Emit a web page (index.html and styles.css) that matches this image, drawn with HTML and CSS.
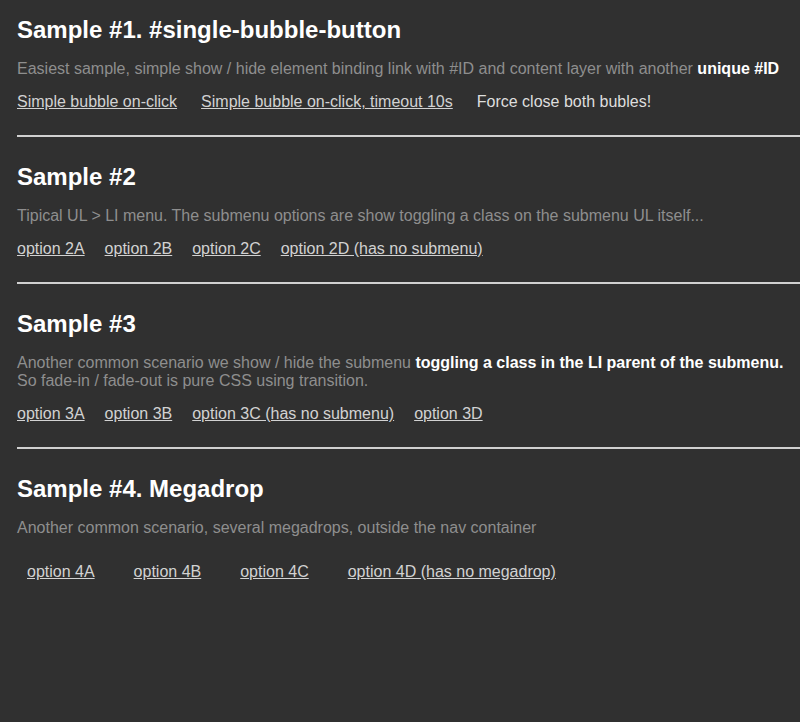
FILE: index.html
```html
<!DOCTYPE html>
<html>
<head>
<meta charset="utf-8">
<link rel="stylesheet" href="styles.css">
</head>
<body>
<section class="sample">
  <h2 class="title">Sample #1. #single-bubble-button</h2>
  <p class="desc">Easiest sample, simple show / hide element binding link with #ID and content layer with another <strong class="hl">unique #ID</strong></p>
  <nav class="links links-wide">
    <a href="#" class="link">Simple bubble on-click</a>
    <a href="#" class="link">Simple bubble on-click, timeout 10s</a>
    <span class="link plain">Force close both bubles!</span>
  </nav>
</section>
<hr class="rule">
<section class="sample">
  <h2 class="title">Sample #2</h2>
  <p class="desc">Tipical UL &gt; LI menu. The submenu options are show toggling a class on the submenu UL itself...</p>
  <ul class="links menu">
    <li><a href="#" class="link">option 2A</a></li>
    <li><a href="#" class="link">option 2B</a></li>
    <li><a href="#" class="link">option 2C</a></li>
    <li><a href="#" class="link">option 2D (has no submenu)</a></li>
  </ul>
</section>
<hr class="rule">
<section class="sample">
  <h2 class="title">Sample #3</h2>
  <p class="desc">Another common scenario we show / hide the submenu <strong class="hl">toggling a class in the LI parent of the submenu.</strong><br>So fade-in / fade-out is pure CSS using transition.</p>
  <ul class="links menu">
    <li><a href="#" class="link">option 3A</a></li>
    <li><a href="#" class="link">option 3B</a></li>
    <li><a href="#" class="link">option 3C (has no submenu)</a></li>
    <li><a href="#" class="link">option 3D</a></li>
  </ul>
</section>
<hr class="rule">
<section class="sample">
  <h2 class="title">Sample #4. Megadrop</h2>
  <p class="desc">Another common scenario, several megadrops, outside the nav container</p>
  <ul class="links mega">
    <li><a href="#" class="link">option 4A</a></li>
    <li><a href="#" class="link">option 4B</a></li>
    <li><a href="#" class="link">option 4C</a></li>
    <li><a href="#" class="link">option 4D (has no megadrop)</a></li>
  </ul>
</section>
</body>
</html>
```
FILE: styles.css
```css
html, body {
  background: #303030;
}
body {
  margin: 0;
  padding: 16px 0 0 17px;
  font-family: "Liberation Sans", Arial, Helvetica, sans-serif;
  color: #d4d4d4;
}
.sample {
  display: flex;
  flex-direction: column;
}
.title {
  margin: 0;
  font-size: 24px;
  line-height: 28px;
  font-weight: bold;
  color: #ffffff;
}
.desc {
  margin: 16px 0 0;
  font-size: 16px;
  line-height: 18px;
  color: #8e8e8e;
}
.hl {
  color: #ffffff;
  font-weight: bold;
}
.links {
  display: flex;
  gap: 20px;
  margin: 14px 0 0;
  padding: 0;
  list-style: none;
  font-size: 16px;
  line-height: 20px;
}
.links-wide {
  gap: 24px;
}
.mega {
  margin-top: 25px;
  padding-left: 10px;
  gap: 39px;
}
.link {
  color: #d2d2d2;
  text-decoration: underline;
}
.plain {
  text-decoration: none;
  color: #dedede;
}
.rule {
  margin: 23px 0 26px;
  border: 0;
  height: 2px;
  background: #d0d0d0;
}
```
